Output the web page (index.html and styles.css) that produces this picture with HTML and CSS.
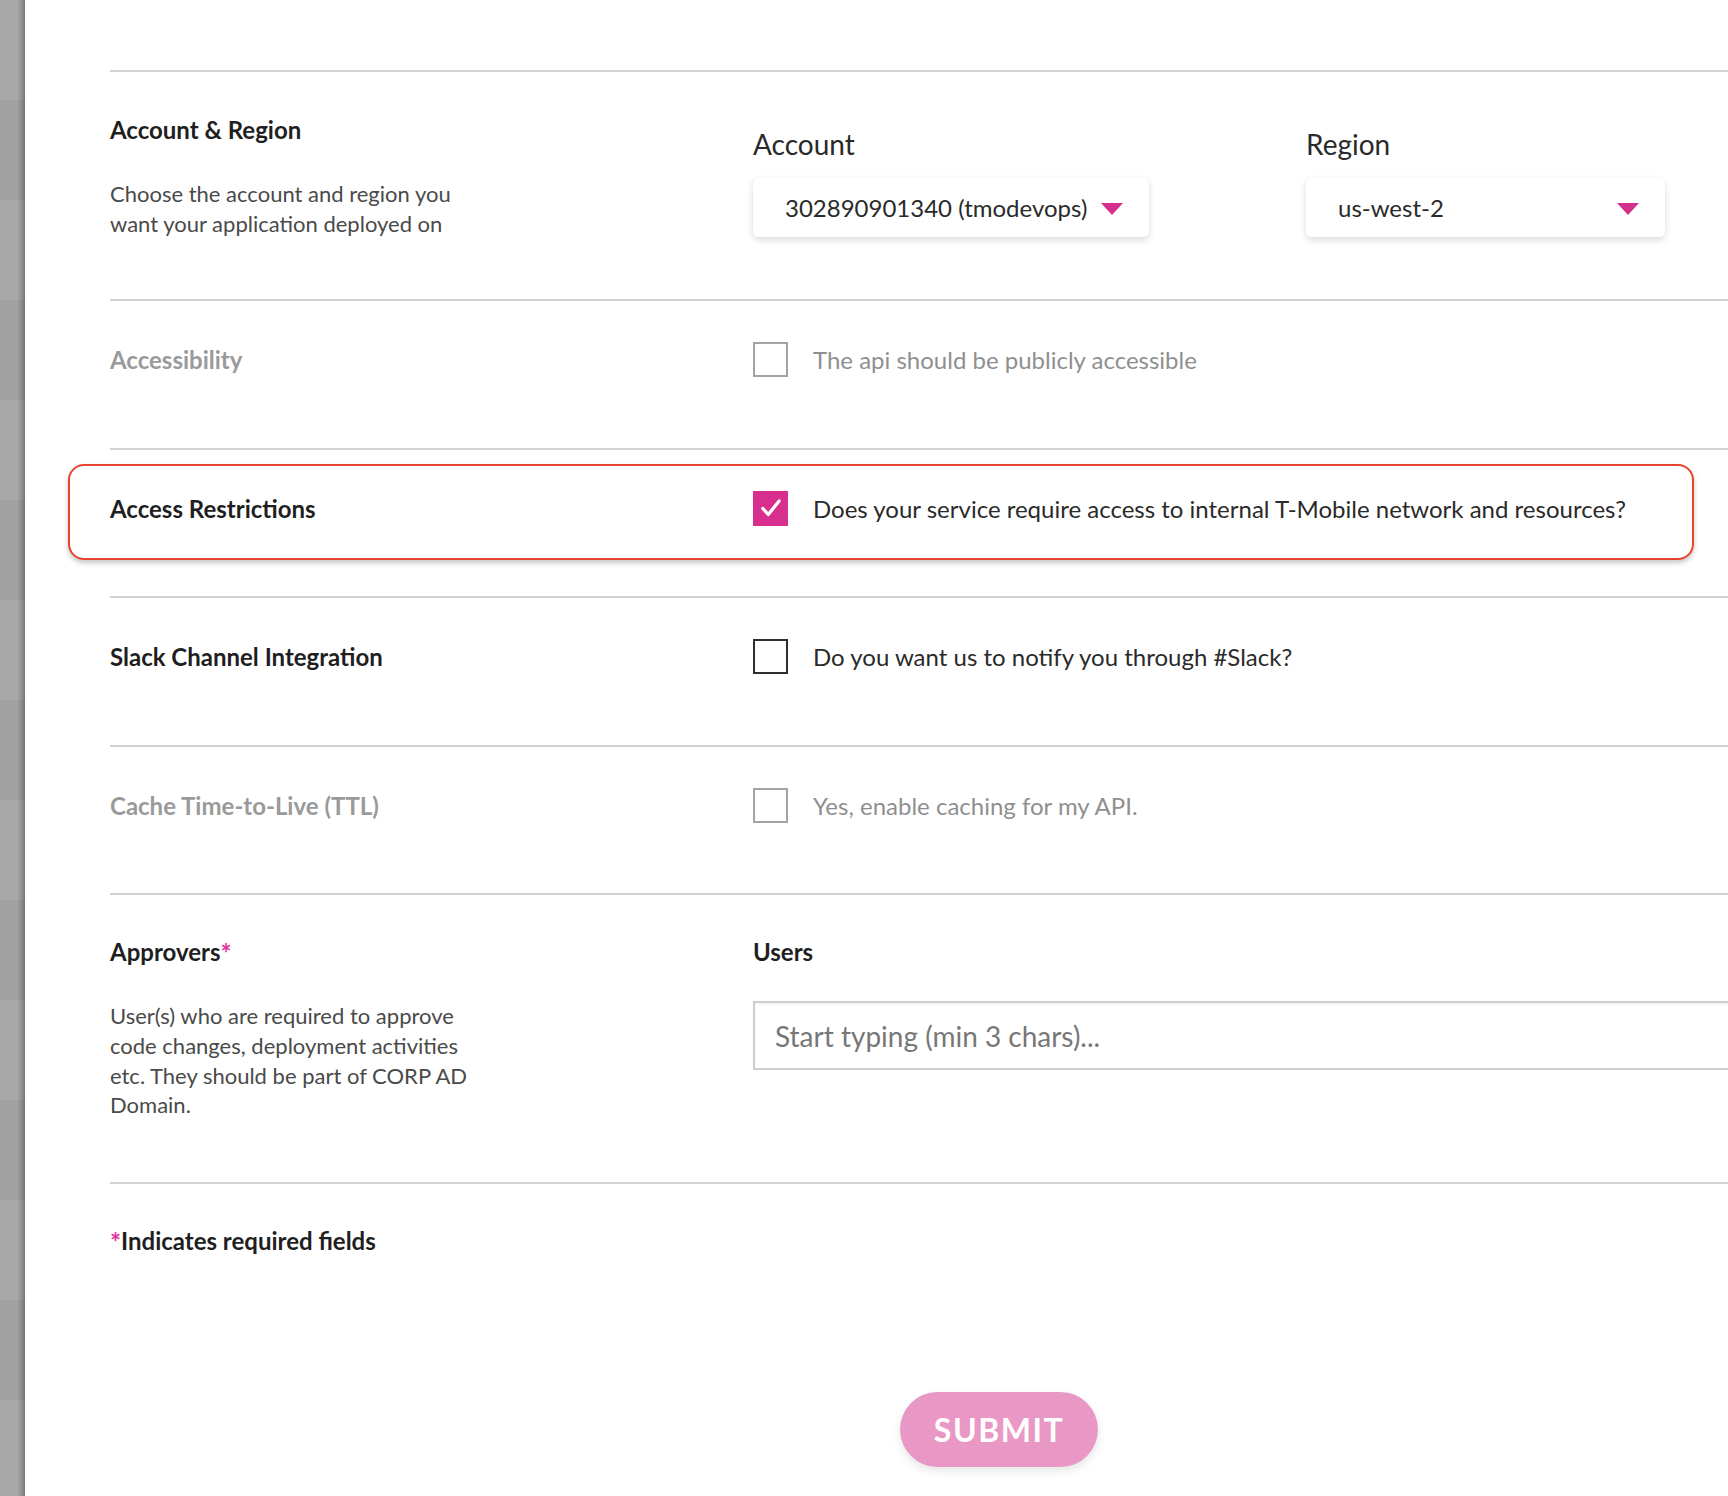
FILE: index.html
```html
<!DOCTYPE html>
<html lang="en">
<head>
<meta charset="utf-8">
<title>Create Service</title>
<link rel="stylesheet" href="styles.css">
</head>
<body>
<div class="page">
  <div class="backdrop"></div>
  <main class="panel">
    <form class="form">
      <section class="row row-account">
        <div class="label-col">
          <h3 class="heading">Account &amp; Region</h3>
          <p class="desc">Choose the account and region you want your application deployed on</p>
        </div>
        <div class="field-col selects">
          <div class="select-group group-account">
            <div class="select-label">Account</div>
            <div class="select select-account"><span>302890901340 (tmodevops)</span><span class="caret"></span></div>
          </div>
          <div class="select-group group-region">
            <div class="select-label">Region</div>
            <div class="select select-region"><span>us-west-2</span><span class="caret"></span></div>
          </div>
        </div>
      </section>

      <section class="row row-check">
        <div class="label-col">
          <h3 class="heading muted">Accessibility</h3>
        </div>
        <div class="field-col">
          <label class="check muted"><span class="box box-muted"></span><span class="check-text">The api should be publicly accessible</span></label>
        </div>
      </section>

      <section class="row row-check row-highlight">
        <div class="highlight"></div>
        <div class="label-col">
          <h3 class="heading">Access Restrictions</h3>
        </div>
        <div class="field-col">
          <label class="check"><span class="box box-checked"><svg viewBox="0 0 24 24" width="26" height="26"><path d="M4.5 12.5 L9.5 18 L19.5 5.5" fill="none" stroke="#fff" stroke-width="3" stroke-linecap="round" stroke-linejoin="round"/></svg></span><span class="check-text">Does your service require access to internal T-Mobile network and resources?</span></label>
        </div>
      </section>

      <section class="row row-check">
        <div class="label-col">
          <h3 class="heading">Slack Channel Integration</h3>
        </div>
        <div class="field-col">
          <label class="check"><span class="box"></span><span class="check-text">Do you want us to notify you through #Slack?</span></label>
        </div>
      </section>

      <section class="row row-check">
        <div class="label-col">
          <h3 class="heading muted">Cache Time-to-Live (TTL)</h3>
        </div>
        <div class="field-col">
          <label class="check muted"><span class="box box-muted"></span><span class="check-text">Yes, enable caching for my API.</span></label>
        </div>
      </section>

      <section class="row row-approvers">
        <div class="label-col">
          <h3 class="heading">Approvers<span class="req">*</span></h3>
          <p class="desc desc-approvers">User(s) who are required to approve code changes, deployment activities etc. They should be part of CORP AD Domain.</p>
        </div>
        <div class="field-col">
          <div class="users-label">Users</div>
          <div class="users-input">Start typing (min 3 chars)...</div>
        </div>
      </section>

      <section class="row row-footer">
        <p class="required-note"><span class="req">*</span>Indicates required fields</p>
        <div class="actions">
          <button type="button" class="submit">SUBMIT</button>
        </div>
      </section>
    </form>
  </main>
</div>
</body>
</html>
```
FILE: styles.css
```css
html, body {
  margin: 0;
  padding: 0;
}
body {
  width: 1728px;
  height: 1496px;
  overflow: hidden;
  background: #fff;
  font-family: Lato, "Open Sans", "Liberation Sans", sans-serif;
  color: #222;
}
.page {
  display: flex;
  height: 1496px;
}
.backdrop {
  flex: none;
  width: 25px;
  background:
    linear-gradient(to right, rgba(0,0,0,0) 0, rgba(0,0,0,0) 17px, rgba(0,0,0,0.12) 21px, rgba(0,0,0,0.3) 25px),
    repeating-linear-gradient(to bottom, #a9a9a9 0, #a9a9a9 100px, #a2a2a2 100px, #a2a2a2 200px);
}
.panel {
  flex: none;
  padding: 70px 0 0 85px;
}
.form {
  width: 1778px;
}
.row {
  display: grid;
  grid-template-columns: 643px 1fr;
  border-top: 2px solid #d2d2d2;
}
.heading {
  margin: 0;
  font-size: 24px;
  font-weight: 700;
  line-height: 35px;
  color: #1f1f1f;
}
.heading.muted {
  color: #9a9a9a;
}
.desc {
  margin: 0;
  max-width: 372px;
  font-size: 22px;
  line-height: 30px;
  color: #4a4a4a;
}

/* account & region */
.row-account {
  padding: 40px 0 60px;
}
.row-account .desc {
  margin-top: 32px;
}
.selects {
  display: flex;
  padding-top: 16px;
}
.group-account {
  width: 553px;
}
.select-label {
  font-size: 28px;
  line-height: 32px;
  color: #2a2a2a;
}
.select {
  margin-top: 18px;
  height: 59px;
  box-sizing: border-box;
  padding: 0 26px 0 32px;
  display: flex;
  align-items: center;
  justify-content: space-between;
  background: #fff;
  border-radius: 5px;
  box-shadow: 0 3px 7px rgba(0,0,0,0.14), 0 0 1px rgba(0,0,0,0.08);
  font-size: 24px;
  color: #2a2a2a;
}
.select-account {
  width: 396px;
}
.select-region {
  width: 359px;
}
.caret {
  width: 0;
  height: 0;
  border-left: 11px solid transparent;
  border-right: 11px solid transparent;
  border-top: 12px solid #d6308d;
  margin-top: 3px;
}

/* checkbox rows */
.row-check {
  padding: 41px 0 70.5px;
}
.check {
  display: flex;
  align-items: center;
  gap: 25px;
  font-size: 24px;
  line-height: 35px;
  color: #2a2a2a;
}
.check.muted {
  color: #8f8f8f;
}
.box {
  flex: none;
  width: 35px;
  height: 35px;
  box-sizing: border-box;
  border: 2px solid #2e2e2e;
  background: #fff;
  display: flex;
  align-items: center;
  justify-content: center;
}
.box-muted {
  border-color: #a3a3a3;
}
.box-checked {
  border: none;
  background: #d82f8e;
}
.row-highlight {
  position: relative;
}
.highlight {
  position: absolute;
  left: -42px;
  top: 14px;
  width: 1626px;
  height: 96px;
  box-sizing: border-box;
  border: 2.5px solid #e6442e;
  border-radius: 16px;
  box-shadow: 0 3px 5px rgba(0,0,0,0.22);
  pointer-events: none;
}

/* approvers */
.row-approvers {
  padding: 39px 0 62px;
}
.desc-approvers {
  margin-top: 32px;
  line-height: 29.75px;
}
.users-label {
  font-size: 24px;
  font-weight: 700;
  line-height: 35px;
  color: #1f1f1f;
}
.users-input {
  margin-top: 32px;
  height: 69px;
  box-sizing: border-box;
  border: 2px solid #cdcdcd;
  box-shadow: inset 0 2px 2px rgba(0,0,0,0.04);
  padding: 0 20px;
  display: flex;
  align-items: center;
  font-size: 28px;
  color: #777;
}
.req {
  color: #e0359a;
  font-size: 26px;
  line-height: 1;
  vertical-align: -2px;
}

/* footer */
.row-footer {
  display: block;
  padding-top: 39px;
}
.required-note {
  margin: 0;
  font-size: 24px;
  font-weight: 700;
  line-height: 35px;
  color: #1f1f1f;
}
.actions {
  display: flex;
  justify-content: center;
  margin-top: 134px;
}
.submit {
  width: 198px;
  height: 75px;
  border: none;
  border-radius: 38px;
  background: #e998c5;
  color: #fff;
  font-family: Lato, "Open Sans", "Liberation Sans", sans-serif;
  font-size: 32px;
  font-weight: 700;
  letter-spacing: 1.5px;
  box-shadow: 0 4px 10px rgba(0,0,0,0.1);
  padding: 0;
}
```
